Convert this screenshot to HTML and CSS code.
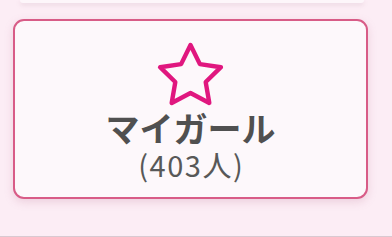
FILE: index.html
```html
<!DOCTYPE html>
<html lang="ja">
<head>
<meta charset="utf-8">
<link rel="stylesheet" href="styles.css">
</head>
<body>
<div class="page">
  <div class="prev"></div>
  <div class="card">
    <svg class="star" viewBox="0 0 24 24" width="73" height="73" aria-hidden="true">
      <path d="M12 2l3.09 6.26L22 9.27l-5 4.87 1.18 6.88L12 17.77l-6.18 3.25L7 14.14 2 9.27l6.91-1.01L12 2z" fill="none" stroke="#e0177f" stroke-width="1.45" stroke-linejoin="round" stroke-linecap="round"/>
    </svg>
    <div class="title">マイガール</div>
    <div class="count">(403人)</div>
  </div>
  <div class="spacer"></div>
  <div class="footer-line"></div>
</div>
</body>
</html>
```

FILE: styles.css
```css
html, body {
  margin: 0;
  padding: 0;
}
body {
  background: #fcedf5;
  font-family: "Noto Sans CJK JP", "Noto Sans", sans-serif;
}
.page {
  height: 237px;
  display: flex;
  flex-direction: column;
  overflow: hidden;
}
.prev {
  height: 3px;
  margin: 0 28px 0 20px;
  background: #fdf6fa;
  border-radius: 0 0 10px 10px;
  box-shadow: 0 2px 4px rgba(180, 140, 160, 0.25);
}
.card {
  margin: 16px 24px 0 13px;
  height: 180px;
  box-sizing: border-box;
  border: 2px solid #d85c87;
  border-radius: 11px;
  background: #fdf8fb;
  box-shadow: 0 3px 8px rgba(190, 120, 150, 0.25);
  display: flex;
  flex-direction: column;
  align-items: center;
  padding-top: 18px;
}
.star {
  display: block;
}
.title {
  margin-top: -4px;
  font-size: 34px;
  font-weight: 700;
  line-height: 40px;
  color: #505050;
}
.count {
  font-size: 29px;
  line-height: 30px;
  letter-spacing: 1.5px;
  padding-left: 1.5px;
  color: #585858;
  margin-top: 1px;
}
.spacer {
  flex: 1;
}
.footer-line {
  height: 1px;
  background: #d9c9d1;
}
```
